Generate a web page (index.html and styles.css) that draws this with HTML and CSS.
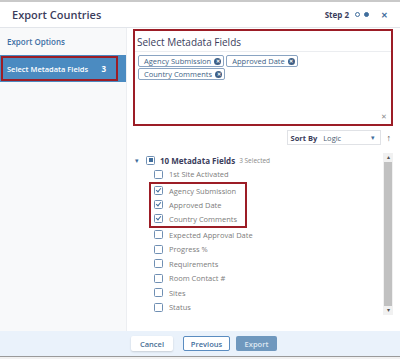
FILE: index.html
```html
<!DOCTYPE html>
<html lang="en">
<head>
  <meta charset="UTF-8" />
  <title>Export Countries</title>
  <link rel="stylesheet" href="styles.css">
</head>
<body>
  <div class="topline"></div>
  <div class="modal">
    <div class="header">
      <div class="title">Export Countries</div>
      <div class="steps">
        <span class="step-label">Step 2</span>
        <span class="dot"></span>
        <span class="dot on"></span>
        <span class="close">&#x2715;</span>
      </div>
    </div>

    <div class="body">
      <div class="sidebar">
        <div class="side-link">Export Options</div>
        <div class="side-item">
          <div class="side-outline">
            <span>Select Metadata Fields</span>
            <span class="count">3</span>
          </div>
        </div>
      </div>

      <div class="main">
        <div class="picker">
          <div class="picker-title">Select Metadata Fields</div>
          <div class="tags">
            <span class="tag">Agency Submission <i class="tag-x">&#x2715;</i></span>
            <span class="tag">Approved Date <i class="tag-x">&#x2715;</i></span>
            <span class="tag">Country Comments <i class="tag-x">&#x2715;</i></span>
          </div>
          <span class="clear">&#x2715;</span>
        </div>

        <div class="sort-row">
          <div class="sort-box">
            <b>Sort By</b>
            <span class="sort-val">Logic</span>
            <span class="caret">&#9662;</span>
          </div>
          <span class="sort-dir">&#8593;</span>
        </div>

        <div class="tree">
          <div class="tree-list">
            <div class="group">
              <span class="toggle">&#9662;</span>
              <span class="cb partial"></span>
              <b>10 Metadata Fields</b>
              <span class="sel">3 Selected</span>
            </div>
            <div class="item"><span class="cb"></span>1st Site Activated</div>
            <div class="checked-group">
              <div class="item"><span class="cb on"></span>Agency Submission</div>
              <div class="item"><span class="cb on"></span>Approved Date</div>
              <div class="item"><span class="cb on"></span>Country Comments</div>
            </div>
            <div class="item"><span class="cb"></span>Expected Approval Date</div>
            <div class="item"><span class="cb"></span>Progress %</div>
            <div class="item"><span class="cb"></span>Requirements</div>
            <div class="item"><span class="cb"></span>Room Contact #</div>
            <div class="item"><span class="cb"></span>Sites</div>
            <div class="item"><span class="cb"></span>Status</div>
          </div>
          <div class="scrollbar">
            <span class="arrow">&#9652;</span>
            <div class="thumb"></div>
            <span class="arrow">&#9662;</span>
          </div>
        </div>
      </div>
    </div>

    <div class="footer">
      <button class="btn cancel">Cancel</button>
      <button class="btn prev">Previous</button>
      <button class="btn export">Export</button>
    </div>
  </div>
  <div class="bottomline"></div>
</body>
</html>
```

FILE: styles.css
```css
body {
  margin: 0;
  width: 400px;
  height: 359px;
  overflow: hidden;
  font-family: "Open Sans", Arial, sans-serif;
  background: #f1f1f1;
  color: #3c3f5a;
}

.topline {
  height: 2px;
  background: #c9c9c9;
}

.modal {
  background: #fff;
  height: 354px;
  display: flex;
  flex-direction: column;
}

.header {
  height: 25px;
  border-bottom: 1px solid #e2e5ea;
  display: flex;
  align-items: center;
  justify-content: space-between;
  padding: 0 12px 0 12px;
}

.title {
  font-size: 11px;
  font-weight: 600;
  color: #3b3d5c;
}

.steps {
  display: flex;
  align-items: center;
  gap: 4px;
}

.step-label {
  font-size: 8px;
  font-weight: 700;
  color: #3b3d5c;
  margin-right: 2px;
}

.dot {
  width: 5px;
  height: 5px;
  border-radius: 50%;
  border: 1px solid #3f6d9c;
  box-sizing: border-box;
}

.dot.on {
  background: #3f6d9c;
}

.close {
  font-size: 8px;
  font-weight: 700;
  color: #3f6d9c;
  margin-left: 8px;
}

.body {
  flex: 1;
  display: flex;
}

.sidebar {
  width: 126px;
  background: #f8f9fa;
  border-right: 1px solid #eceef1;
}

.side-link {
  font-size: 8px;
  font-weight: 600;
  color: #3e6fa4;
  padding: 8px 0 8px 7px;
}

.side-item {
  background: #4b8bc1;
  padding: 1px 8px 1px 1px;
}

.side-outline {
  border: 2px solid #9c1d26;
  height: 21px;
  display: flex;
  align-items: center;
  justify-content: space-between;
  padding: 0 10px 0 4px;
  font-size: 7.5px;
  font-weight: 600;
  color: #fff;
}

.side-outline .count {
  font-size: 8px;
  font-weight: 700;
}

.main {
  flex: 1;
  padding: 1px 7px 0 6px;
}

.picker {
  position: relative;
  border: 2px solid #9c1d26;
  height: 93px;
}

.picker-title {
  font-size: 10px;
  font-weight: 500;
  color: #3b3d5c;
  padding: 4px 2px 0;
  height: 16px;
  border-bottom: 1px solid #ebedf0;
}

.tags {
  display: flex;
  flex-wrap: wrap;
  gap: 1px 2px;
  padding: 3px 4px 0 3px;
  width: 210px;
}

.tag {
  display: inline-flex;
  align-items: center;
  gap: 3px;
  height: 10px;
  padding: 0 2px 0 5px;
  border: 1px solid #8aa4c2;
  border-radius: 2px;
  font-size: 7.5px;
  color: #3e5f86;
  line-height: 10px;
}

.tag-x {
  width: 7px;
  height: 7px;
  border-radius: 50%;
  background: #3e5f86;
  color: #fff;
  font-size: 5px;
  font-style: normal;
  font-weight: 700;
  line-height: 7px;
  text-align: center;
}

.clear {
  position: absolute;
  right: 4px;
  bottom: 3px;
  font-size: 7px;
  color: #8a8a8a;
}

.sort-row {
  display: flex;
  justify-content: flex-end;
  align-items: center;
  margin-top: 4px;
  gap: 6px;
  padding-right: 2px;
}

.sort-box {
  width: 84px;
  height: 13px;
  border: 1px solid #e0e2e6;
  display: flex;
  align-items: center;
  padding: 0 5px 0 3px;
  box-sizing: content-box;
  font-size: 7.5px;
  color: #3b3d5c;
}

.sort-val {
  margin-left: 6px;
  flex: 1;
  color: #4b5c73;
}

.caret {
  font-size: 7px;
  color: #3f6d9c;
}

.sort-dir {
  font-size: 9px;
  color: #555;
}

.tree {
  display: flex;
  margin-top: 8px;
  height: 162px;
}

.tree-list {
  flex: 1;
  padding-left: 2px;
}

.group {
  display: flex;
  align-items: center;
  height: 14px;
  font-size: 8px;
  color: #3b3d5c;
}

.toggle {
  font-size: 7px;
  color: #3f6d9c;
  width: 11px;
}

.group .cb {
  margin-left: 0;
  margin-right: 5px;
}

.sel {
  font-size: 6.5px;
  color: #8a8a8a;
  margin-left: 4px;
}

.item {
  display: flex;
  align-items: center;
  height: 14.5px;
  padding-left: 19px;
  font-size: 7.5px;
  color: #7d7d7d;
}

.checked-group {
  border: 2px solid #9c1d26;
  width: 94px;
  margin-left: 14px;
}

.checked-group .item {
  padding-left: 3px;
  height: 14px;
}

.cb {
  width: 7px;
  height: 7px;
  border: 1px solid #6f8fb3;
  border-radius: 1.5px;
  margin-right: 6px;
  position: relative;
  flex: none;
}

.cb.on::after {
  content: "";
  position: absolute;
  left: 2px;
  top: 0;
  width: 2px;
  height: 4px;
  border: solid #3f6d9c;
  border-width: 0 1.2px 1.2px 0;
  transform: rotate(40deg);
}

.cb.partial::after {
  content: "";
  position: absolute;
  left: 1.5px;
  top: 1.5px;
  width: 4px;
  height: 4px;
  background: #3f6d9c;
}

.scrollbar {
  width: 10px;
  background: #f1f1f1;
  display: flex;
  flex-direction: column;
  align-items: center;
}

.arrow {
  font-size: 6px;
  color: #555;
  height: 9px;
  line-height: 9px;
}

.thumb {
  flex: 1;
  width: 8px;
  background: #c1c1c1;
}

.footer {
  height: 25px;
  margin-top: auto;
  background: #eaf2fb;
  display: flex;
  align-items: center;
  padding-left: 131px;
  gap: 6px;
}

.btn {
  height: 15px;
  font-family: "Open Sans", Arial, sans-serif;
  font-size: 7.5px;
  font-weight: 600;
  border-radius: 2px;
  padding: 0;
}

.cancel {
  width: 42px;
  background: #fff;
  border: none;
  color: #4a6f95;
  box-shadow: 0 1px 2px rgba(0, 0, 0, 0.15);
  margin-right: 4px;
}

.prev {
  width: 47px;
  background: #fff;
  border: 1px solid #5a8cc0;
  color: #3f6d9c;
}

.export {
  width: 41px;
  background: #6f98be;
  border: none;
  color: #dfe9f3;
}

.bottomline {
  height: 1px;
  background: #9a9a9a;
}
```
